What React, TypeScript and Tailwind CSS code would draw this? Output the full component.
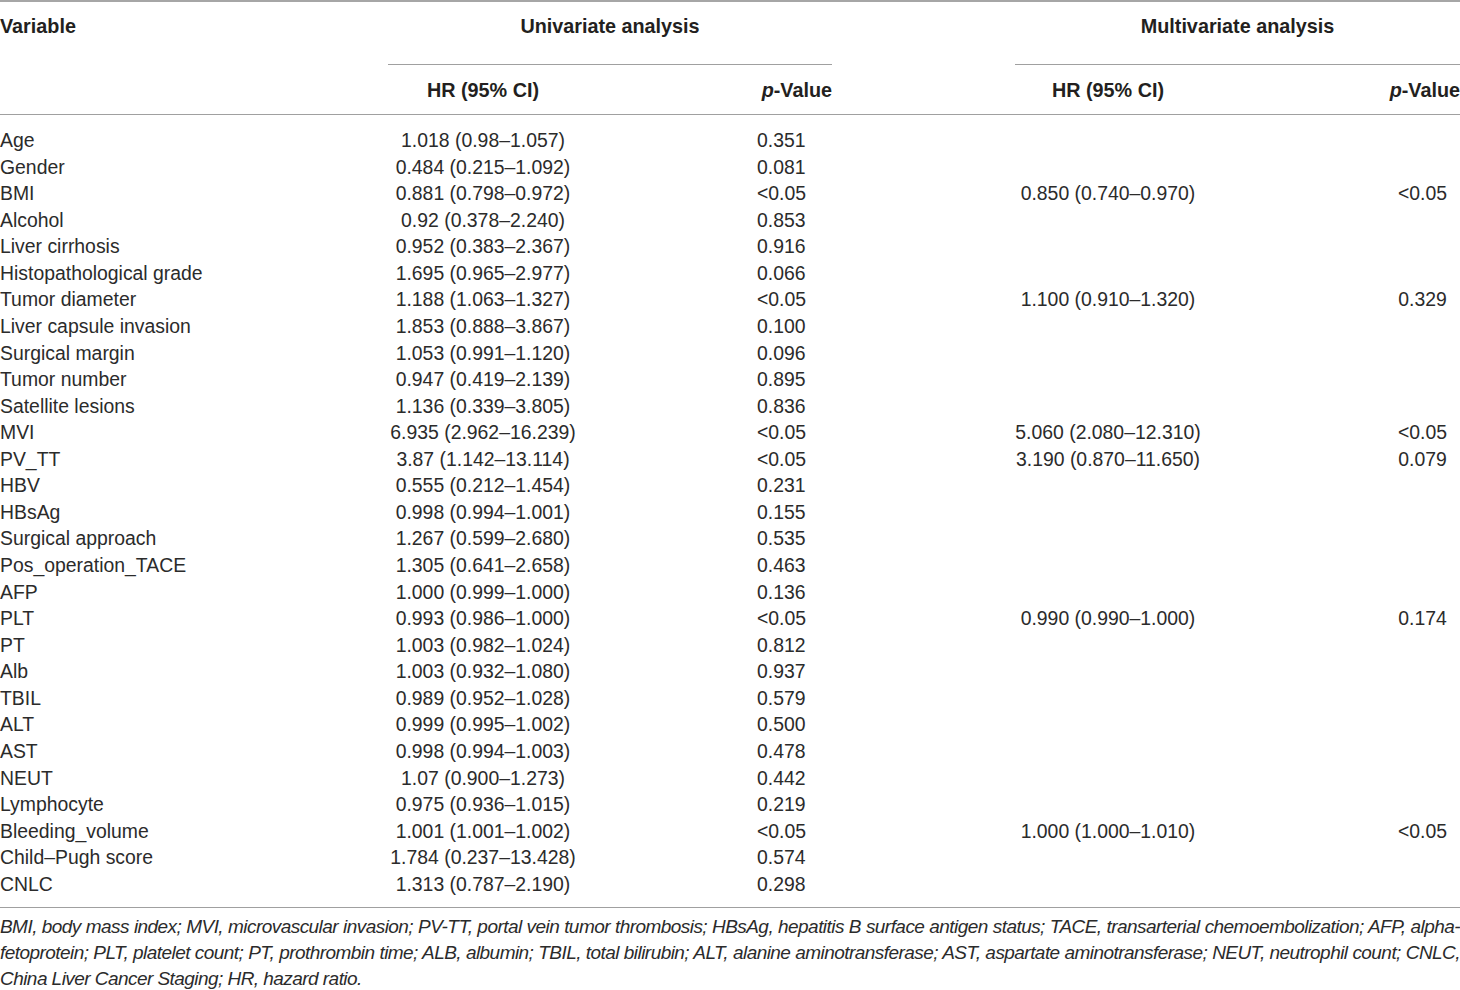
import React from "react";

type Row = [string, string, string, string?, string?];

const rows: Row[] = [
  ["Age", "1.018 (0.98–1.057)", "0.351"],
  ["Gender", "0.484 (0.215–1.092)", "0.081"],
  ["BMI", "0.881 (0.798–0.972)", "<0.05", "0.850 (0.740–0.970)", "<0.05"],
  ["Alcohol", "0.92 (0.378–2.240)", "0.853"],
  ["Liver cirrhosis", "0.952 (0.383–2.367)", "0.916"],
  ["Histopathological grade", "1.695 (0.965–2.977)", "0.066"],
  ["Tumor diameter", "1.188 (1.063–1.327)", "<0.05", "1.100 (0.910–1.320)", "0.329"],
  ["Liver capsule invasion", "1.853 (0.888–3.867)", "0.100"],
  ["Surgical margin", "1.053 (0.991–1.120)", "0.096"],
  ["Tumor number", "0.947 (0.419–2.139)", "0.895"],
  ["Satellite lesions", "1.136 (0.339–3.805)", "0.836"],
  ["MVI", "6.935 (2.962–16.239)", "<0.05", "5.060 (2.080–12.310)", "<0.05"],
  ["PV_TT", "3.87 (1.142–13.114)", "<0.05", "3.190 (0.870–11.650)", "0.079"],
  ["HBV", "0.555 (0.212–1.454)", "0.231"],
  ["HBsAg", "0.998 (0.994–1.001)", "0.155"],
  ["Surgical approach", "1.267 (0.599–2.680)", "0.535"],
  ["Pos_operation_TACE", "1.305 (0.641–2.658)", "0.463"],
  ["AFP", "1.000 (0.999–1.000)", "0.136"],
  ["PLT", "0.993 (0.986–1.000)", "<0.05", "0.990 (0.990–1.000)", "0.174"],
  ["PT", "1.003 (0.982–1.024)", "0.812"],
  ["Alb", "1.003 (0.932–1.080)", "0.937"],
  ["TBIL", "0.989 (0.952–1.028)", "0.579"],
  ["ALT", "0.999 (0.995–1.002)", "0.500"],
  ["AST", "0.998 (0.994–1.003)", "0.478"],
  ["NEUT", "1.07 (0.900–1.273)", "0.442"],
  ["Lymphocyte", "0.975 (0.936–1.015)", "0.219"],
  ["Bleeding_volume", "1.001 (1.001–1.002)", "<0.05", "1.000 (1.000–1.010)", "<0.05"],
  ["Child–Pugh score", "1.784 (0.237–13.428)", "0.574"],
  ["CNLC", "1.313 (0.787–2.190)", "0.298"],
];

const grid =
  "grid grid-cols-[388px_190px_179px_75px_183px_186px_184px_75px]";

export default function App() {
  return (
    <div
      className="w-[1460px] bg-white text-[#231f20]"
      style={{ fontFamily: '"Liberation Sans", Arial, Helvetica, sans-serif' }}
    >
      <div className="border-t-2 border-[#a6a6a6]">
        {/* header row A */}
        <div className={`${grid} text-[19.8px] font-bold leading-[26px]`}>
          <div className="pt-[11px]">Variable</div>
          <div className="col-span-3 pt-[11px] pb-[25px] text-center border-b border-[#a0a0a0]">
            Univariate analysis
          </div>
          <div />
          <div className="col-span-3 pt-[11px] pb-[25px] text-center border-b border-[#a0a0a0]">
            Multivariate analysis
          </div>
        </div>
        {/* header row B */}
        <div
          className={`${grid} text-[19.8px] font-bold leading-[26px] pt-[12px] pb-[11px] border-b border-[#a0a0a0]`}
        >
          <div />
          <div className="text-center">HR (95% CI)</div>
          <div />
          <div className="text-right whitespace-nowrap">
            <span className="italic">p</span>-Value
          </div>
          <div />
          <div className="text-center">HR (95% CI)</div>
          <div />
          <div className="text-right whitespace-nowrap">
            <span className="italic">p</span>-Value
          </div>
        </div>
        {/* body */}
        <div className="pt-[12px] pb-[9.5px] border-b border-[#a0a0a0] text-[19.4px] leading-[26.57px] text-[#2b2b2b]">
          {rows.map((r, i) => (
            <div key={i} className={grid}>
              <div className="whitespace-nowrap">{r[0]}</div>
              <div className="text-center whitespace-nowrap">{r[1]}</div>
              <div />
              <div className="text-left whitespace-nowrap">{r[2]}</div>
              <div />
              <div className="text-center whitespace-nowrap">{r[3] ?? ""}</div>
              <div />
              <div className="text-center whitespace-nowrap">{r[4] ?? ""}</div>
            </div>
          ))}
        </div>
        {/* footnote */}
        <div className="pt-[6px] text-[19px] leading-[26px] italic tracking-[-0.55px] text-[#2b2b2b]">
          <div className="whitespace-nowrap text-justify [text-align-last:justify]">
            BMI, body mass index; MVI, microvascular invasion; PV-TT, portal vein tumor thrombosis; HBsAg, hepatitis B surface antigen status; TACE, transarterial chemoembolization; AFP, alpha-
          </div>
          <div className="whitespace-nowrap text-justify [text-align-last:justify]">
            fetoprotein; PLT, platelet count; PT, prothrombin time; ALB, albumin; TBIL, total bilirubin; ALT, alanine aminotransferase; AST, aspartate aminotransferase; NEUT, neutrophil count; CNLC,
          </div>
          <div className="whitespace-nowrap">
            China Liver Cancer Staging; HR, hazard ratio.
          </div>
        </div>
      </div>
    </div>
  );
}
